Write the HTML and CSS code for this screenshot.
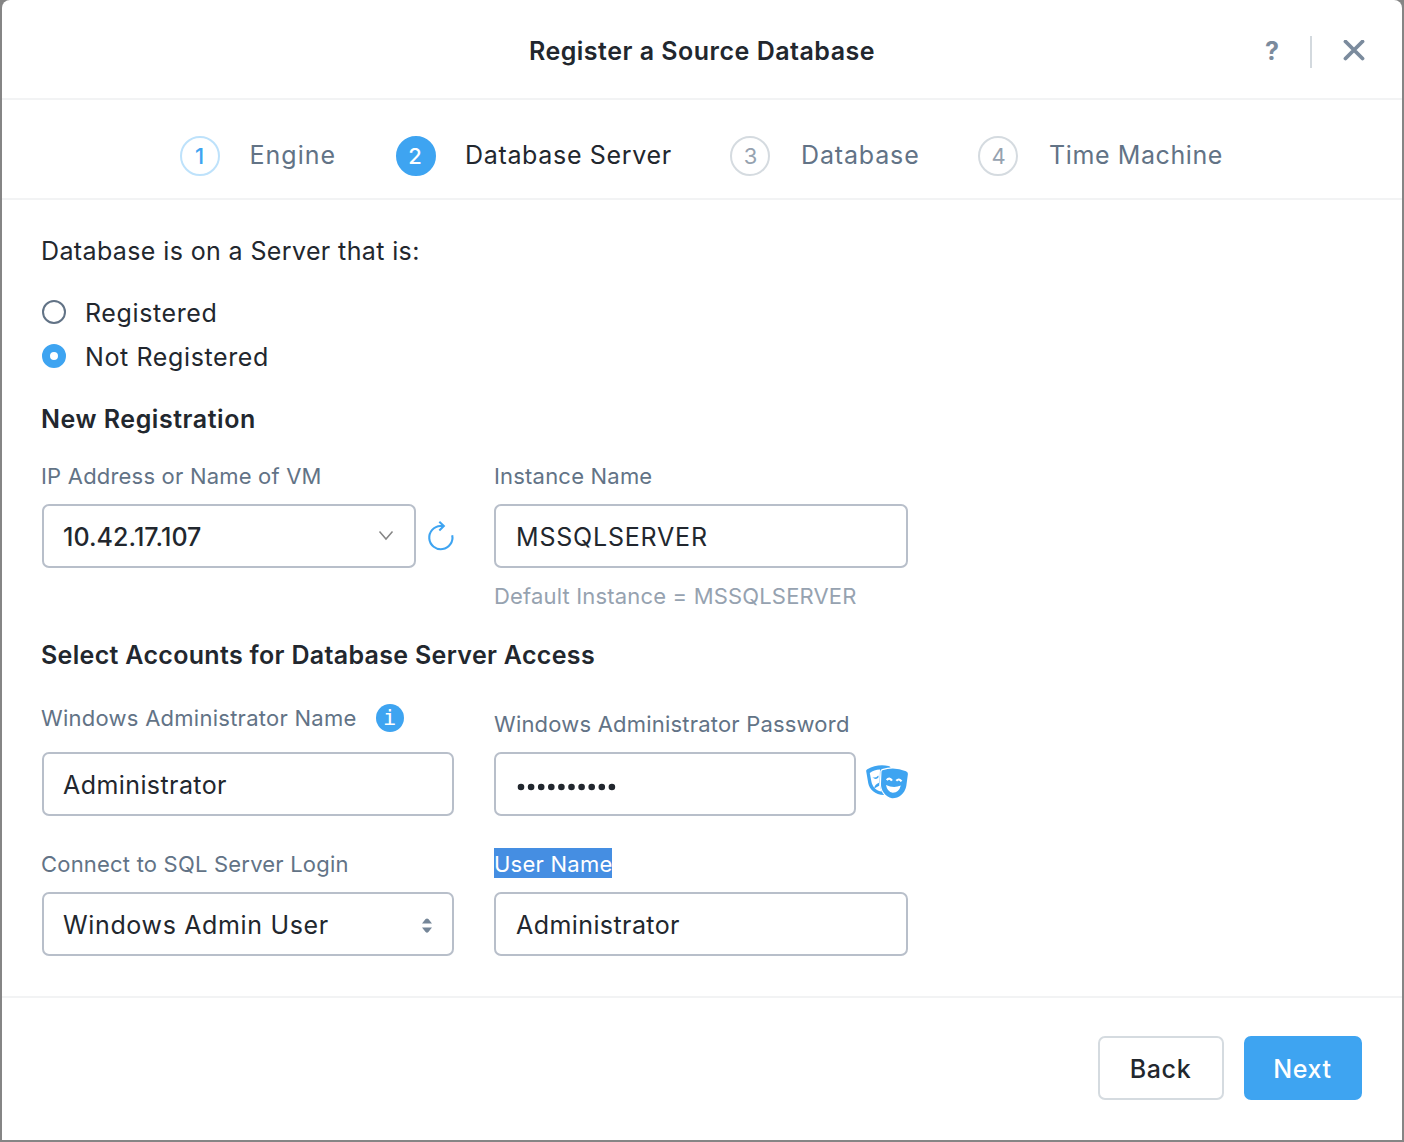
FILE: index.html
```html
<!DOCTYPE html>
<html lang="en">
<head>
<meta charset="utf-8">
<title>Register a Source Database</title>
<link rel="stylesheet" href="styles.css">
</head>
<body>
<main class="dialog">
  <header class="header">
    <h1 class="title">Register a Source Database</h1>
    <div class="header-actions">
      <span class="help">?</span>
      <span class="divider"></span>
      <svg class="close" width="22" height="22" viewBox="0 0 22 22"><path d="M2.5 1.5 19.5 18.5M19.5 1.5 2.5 18.5" fill="none" stroke="#7b8b9d" stroke-width="3.8" stroke-linecap="round"/></svg>
    </div>
  </header>

  <nav class="steps">
    <div class="step done"><span class="num">1</span><span class="step-name engine">Engine</span></div>
    <div class="step current"><span class="num">2</span><span class="step-name server">Database Server</span></div>
    <div class="step"><span class="num">3</span><span class="step-name database">Database</span></div>
    <div class="step"><span class="num">4</span><span class="step-name machine">Time Machine</span></div>
  </nav>

  <section class="content">
    <p class="question">Database is on a Server that is:</p>
    <div class="option"><span class="radio"></span><span class="option-name">Registered</span></div>
    <div class="option"><span class="radio checked"></span><span class="option-name">Not Registered</span></div>

    <h2 class="heading new-registration">New Registration</h2>
    <div class="row instance-row">
      <div class="field">
        <span class="label">IP Address or Name of VM</span>
        <div class="control">
          <div class="input combo"><span class="value ip">10.42.17.107</span><svg width="16" height="12" viewBox="0 0 16 12"><path d="M1.5 .5 8 8 14.5 .5" fill="none" stroke="#858585" stroke-width="1.5"/></svg></div>
          <svg class="refresh" width="28" height="32" viewBox="0 0 28 32"><path d="M25.2 15.2A11.6 11.6 0 1 1 13.5 6H16.5M12.3 1.8 16.8 6 12.3 10.4" fill="none" stroke="#3ea4f1" stroke-width="2.1"/></svg>
        </div>
      </div>
      <div class="field">
        <span class="label">Instance Name</span>
        <div class="input"><span class="value mssql">MSSQLSERVER</span></div>
        <span class="label hint">Default Instance = MSSQLSERVER</span>
      </div>
    </div>

    <h2 class="heading accounts">Select Accounts for Database Server Access</h2>
    <div class="row account-row">
      <div class="field">
        <div class="label-line"><span class="label win-label">Windows Administrator Name</span><span class="info">i</span></div>
        <div class="input"><span class="value admin">Administrator</span></div>
      </div>
      <div class="field">
        <span class="label password-label">Windows Administrator Password</span>
        <div class="control">
          <div class="input password"><svg width="100" height="12" viewBox="0 0 100 12"><path d="M5 8H97" fill="none" stroke="#22272e" stroke-width="6.6" stroke-linecap="round" stroke-dasharray="0 10.1"/></svg></div>
          <svg class="masks" width="44" height="40" viewBox="0 0 44 40">
            <path d="M1.2 7.2Q1 5.8 2.3 5.2 12-.2 23.5 2 25 2.2 25.8 4L24 20 20 31C10.5 31.5 4.3 25.5 3.2 19Z" fill="#3ea4f1"/>
            <path d="M4.8 9Q9 5.8 15 5.5L14.6 19Q14.8 24.5 17 27.5C11 27 7.2 22.5 6.4 17.5Z" fill="#fff"/>
            <path d="M7.3 13.1Q10.5 14.7 13.2 11.4L13.7 13.1Q11 16.9 7.3 13.1M14 18.8Q9.6 20.3 9.2 24.5L14.2 21.8Z" fill="#3ea4f1"/>
            <path d="M17.5 6.2Q29 2.2 41 7.3 43.2 8.2 42.9 10L41.3 22C39.7 30 33.5 34.6 27 34.3 20.3 33 15.6 26 16 19.5L16.5 7.9Q16.5 6.6 17.5 6.2Z" fill="#3ea4f1" stroke="#fff" stroke-width="2.4" paint-order="stroke"/>
            <path d="M21 21Q28.5 24.6 35.8 21.6 34 28.8 27.7 28.7 22.2 27.8 21 21Z" fill="#fff"/>
            <path d="M21.8 16.2Q24.2 12.7 27 16.6M31.3 16.8Q34 14 36.5 17.3" fill="none" stroke="#fff" stroke-width="2.2"/>
          </svg>
        </div>
      </div>
    </div>

    <div class="row login-row">
      <div class="field">
        <span class="label connect-label">Connect to SQL Server Login</span>
        <div class="input select"><span class="value windows">Windows Admin User</span><svg width="10" height="18" viewBox="0 0 10 18"><path d="M0 7.5 3.6 3Q5 1.8 6.4 3L10 7.5ZM0 11.5H10L6.4 16Q5 17.3 3.6 16Z" fill="#758698"/></svg></div>
      </div>
      <div class="field">
        <span class="label selected">User Name</span>
        <div class="input"><span class="value admin">Administrator</span></div>
      </div>
    </div>
  </section>

  <footer class="footer">
    <button class="button back">Back</button>
    <button class="button next">Next</button>
  </footer>
</main>
</body>
</html>
```
FILE: styles.css
```css
* { box-sizing: border-box; }
body { margin: 0; background: #858585; font-family: Inter, "Liberation Sans", sans-serif; color: #22272e; }
h1, h2, p { margin: 0; }
svg { display: block; flex: none; }
.dialog { width: 1400px; height: 1140px; margin: 0 2px 2px; background: #fff; border-radius: 8px 8px 0 0; display: flex; flex-direction: column; white-space: nowrap; }
.header { height: 100px; border-bottom: 2px solid #f2f3f4; display: grid; grid-template-columns: 1fr auto 1fr; align-items: center; padding: 4px 37px 0; }
.title { grid-column: 2; font-size: 25px; line-height: 32px; font-weight: 600; letter-spacing: 0.5px; }
.header-actions { display: flex; align-items: center; justify-content: flex-end; }
.help { color: #7b8b9d; font-size: 25px; line-height: 28px; font-weight: 700; width: 15px; margin: 0 30px 0 0; }
.divider { width: 2px; height: 32px; background: #d3d9de; margin: 2px 31px 0 0; }
.steps { height: 100px; border-bottom: 2px solid #f2f3f4; padding: 14px 0 0 178px; display: grid; grid-template-columns: 216px 334px 248px auto; align-items: center; justify-content: start; }
.step { display: flex; align-items: center; gap: 30px; color: #627386; }
.num { width: 40px; height: 40px; border: 2px solid #d5dbe0; border-radius: 50%; display: flex; align-items: center; justify-content: center; color: #96a2b0; font-size: 22px; padding-left: 1px; }
.step-name { font-size: 25px; line-height: 32px; margin-bottom: 2px; }
.engine { letter-spacing: 1px; margin-left: -0.5px; }
.server { letter-spacing: 0.67px; margin-left: -1px; }
.database { letter-spacing: 0.85px; margin-left: 1px; }
.machine { letter-spacing: 0.6px; margin-left: 1px; }
.done .num { border-color: #bee2fb; color: #3ea4f1; font-weight: 500; padding: 0 1px 0 0; }
.current { color: #22272e; }
.current .num { background: #3ea4f1; border-color: #3ea4f1; color: #fff; font-weight: 500; padding: 0 2px 0 0; }
.content { height: 796px; padding: 35px 40px 0 39px; }
.question { font-size: 25px; line-height: 32px; margin-bottom: 23px; letter-spacing: 0.38px; }
.option { height: 44px; padding-left: 1px; display: flex; align-items: center; gap: 19px; font-size: 25px; }
.option-name { letter-spacing: 0.62px; padding-top: 2px; }
.radio { width: 24px; height: 24px; border: 2px solid #627386; border-radius: 50%; }
.radio.checked { border: 8px solid #3ea4f1; }
.heading { font-size: 25px; line-height: 32px; font-weight: 600; letter-spacing: 0.32px; }
.new-registration { margin-top: 25px; letter-spacing: 0.54px; }
.row { display: grid; grid-template-columns: 413px 414px; column-gap: 40px; }
.field { display: flex; flex-direction: column; align-items: flex-start; }
.field:first-child .input { margin-left: 1px; width: 412px; padding-left: 19px; }
.label { font-size: 22px; line-height: 30px; color: #627386; letter-spacing: 0.2px; }
.input { width: 100%; height: 64px; border: 2px solid #b8bfca; border-radius: 7px; padding: 2px 20px 0; display: flex; align-items: center; justify-content: space-between; font-size: 25px; }
.ip { letter-spacing: 0.05px; font-weight: 500; }
.mssql { letter-spacing: 0.8px; }
.admin { letter-spacing: 0.42px; }
.windows { letter-spacing: 0.65px; }
.control { display: flex; align-items: center; width: 100%; }
.instance-row { margin-top: 26px; height: 151px; }
.instance-row .label { margin-bottom: 13px; }
.field:first-child .combo { width: 374px; flex: none; }
.refresh { margin-left: 11px; }
.instance-row .hint { color: #96a2b0; margin-top: 13px; letter-spacing: 0.17px; }
.accounts { margin-top: 27px; }
.account-row { margin-top: 32px; height: 113px; }
.label-line { height: 49px; display: flex; align-items: flex-start; }
.win-label { letter-spacing: 0.26px; }
.info { width: 28px; height: 28px; border-radius: 50%; background: #3ea4f1; color: #fff; font: 22px/27px "DejaVu Sans Mono", monospace; text-align: center; margin: 0.5px 0 0 19px; }
.password-label { margin: 6px 0 13px; }
.input.password { width: 362px; flex: none; }
.masks { margin-left: 9px; }
.login-row { margin-top: 32px; }
.login-row .label { height: 30px; line-height: 32px; margin-bottom: 14px; }
.login-row .selected { background: #458ee2; color: #fff; width: 118px; letter-spacing: 0.25px; }
.footer { height: 144px; border-top: 2px solid #f2f3f4; padding: 38px 40px 0; display: flex; justify-content: flex-end; gap: 20px; }
.button { height: 64px; border: 2px solid #d5dbe0; border-radius: 7px; background: #fff; font: 500 25px Inter, sans-serif; letter-spacing: 0.6px; color: #22272e; padding: 2px 1px 0 0; }
.back { width: 126px; }
.next { width: 118px; background: #3ea4f1; border-color: #3ea4f1; color: #fff; }
```
